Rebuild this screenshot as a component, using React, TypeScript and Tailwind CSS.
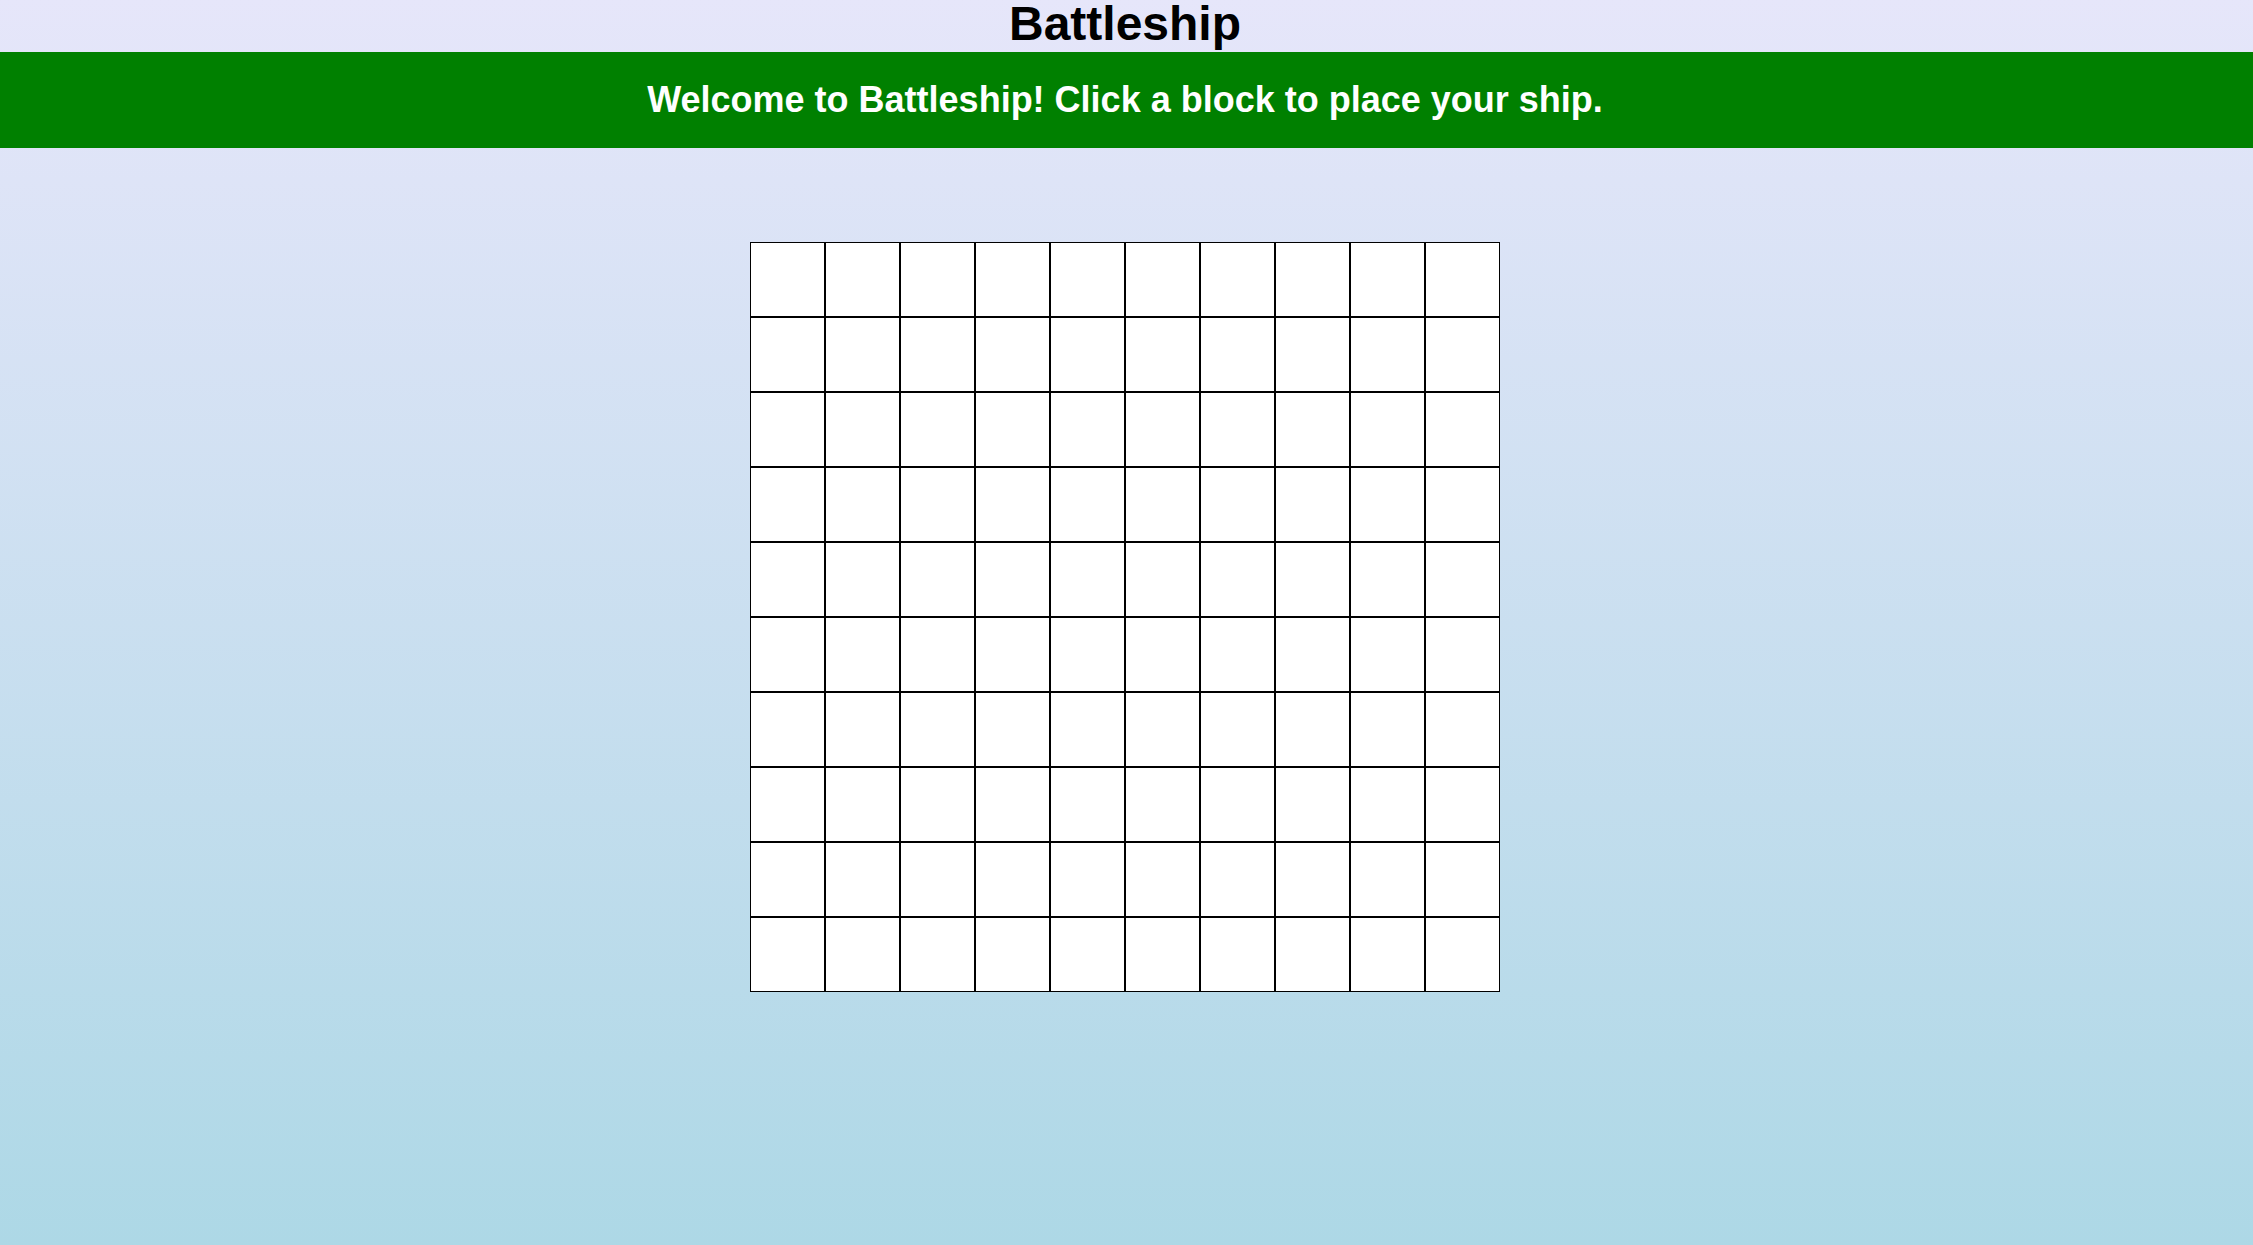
import React from "react";

export default function App() {
  const cells = Array.from({ length: 100 }, (_, i) => i);
  return (
    <div
      className="min-h-screen w-full bg-gradient-to-b from-[#e6e6fa] to-[#add8e6]"
      style={{ fontFamily: '"Liberation Sans", Arial, sans-serif' }}
    >
      <h1 className="h-[52px] w-[2250px] text-center text-[48px] font-bold leading-[47px] text-black">
        Battleship
      </h1>
      <div className="w-full bg-[#008000]">
        <div className="flex h-[96px] w-[2250px] items-center justify-center">
          <h2 className="text-[36px] font-bold text-white">
            Welcome to Battleship! Click a block to place your ship.
          </h2>
        </div>
      </div>
      <div className="flex w-[2250px] justify-center pt-[94px]">
        <div className="grid w-[750px] grid-cols-10">
          {cells.map((i) => (
            <div
              key={i}
              className="box-border h-[75px] w-[75px] border border-black bg-white"
            />
          ))}
        </div>
      </div>
    </div>
  );
}
